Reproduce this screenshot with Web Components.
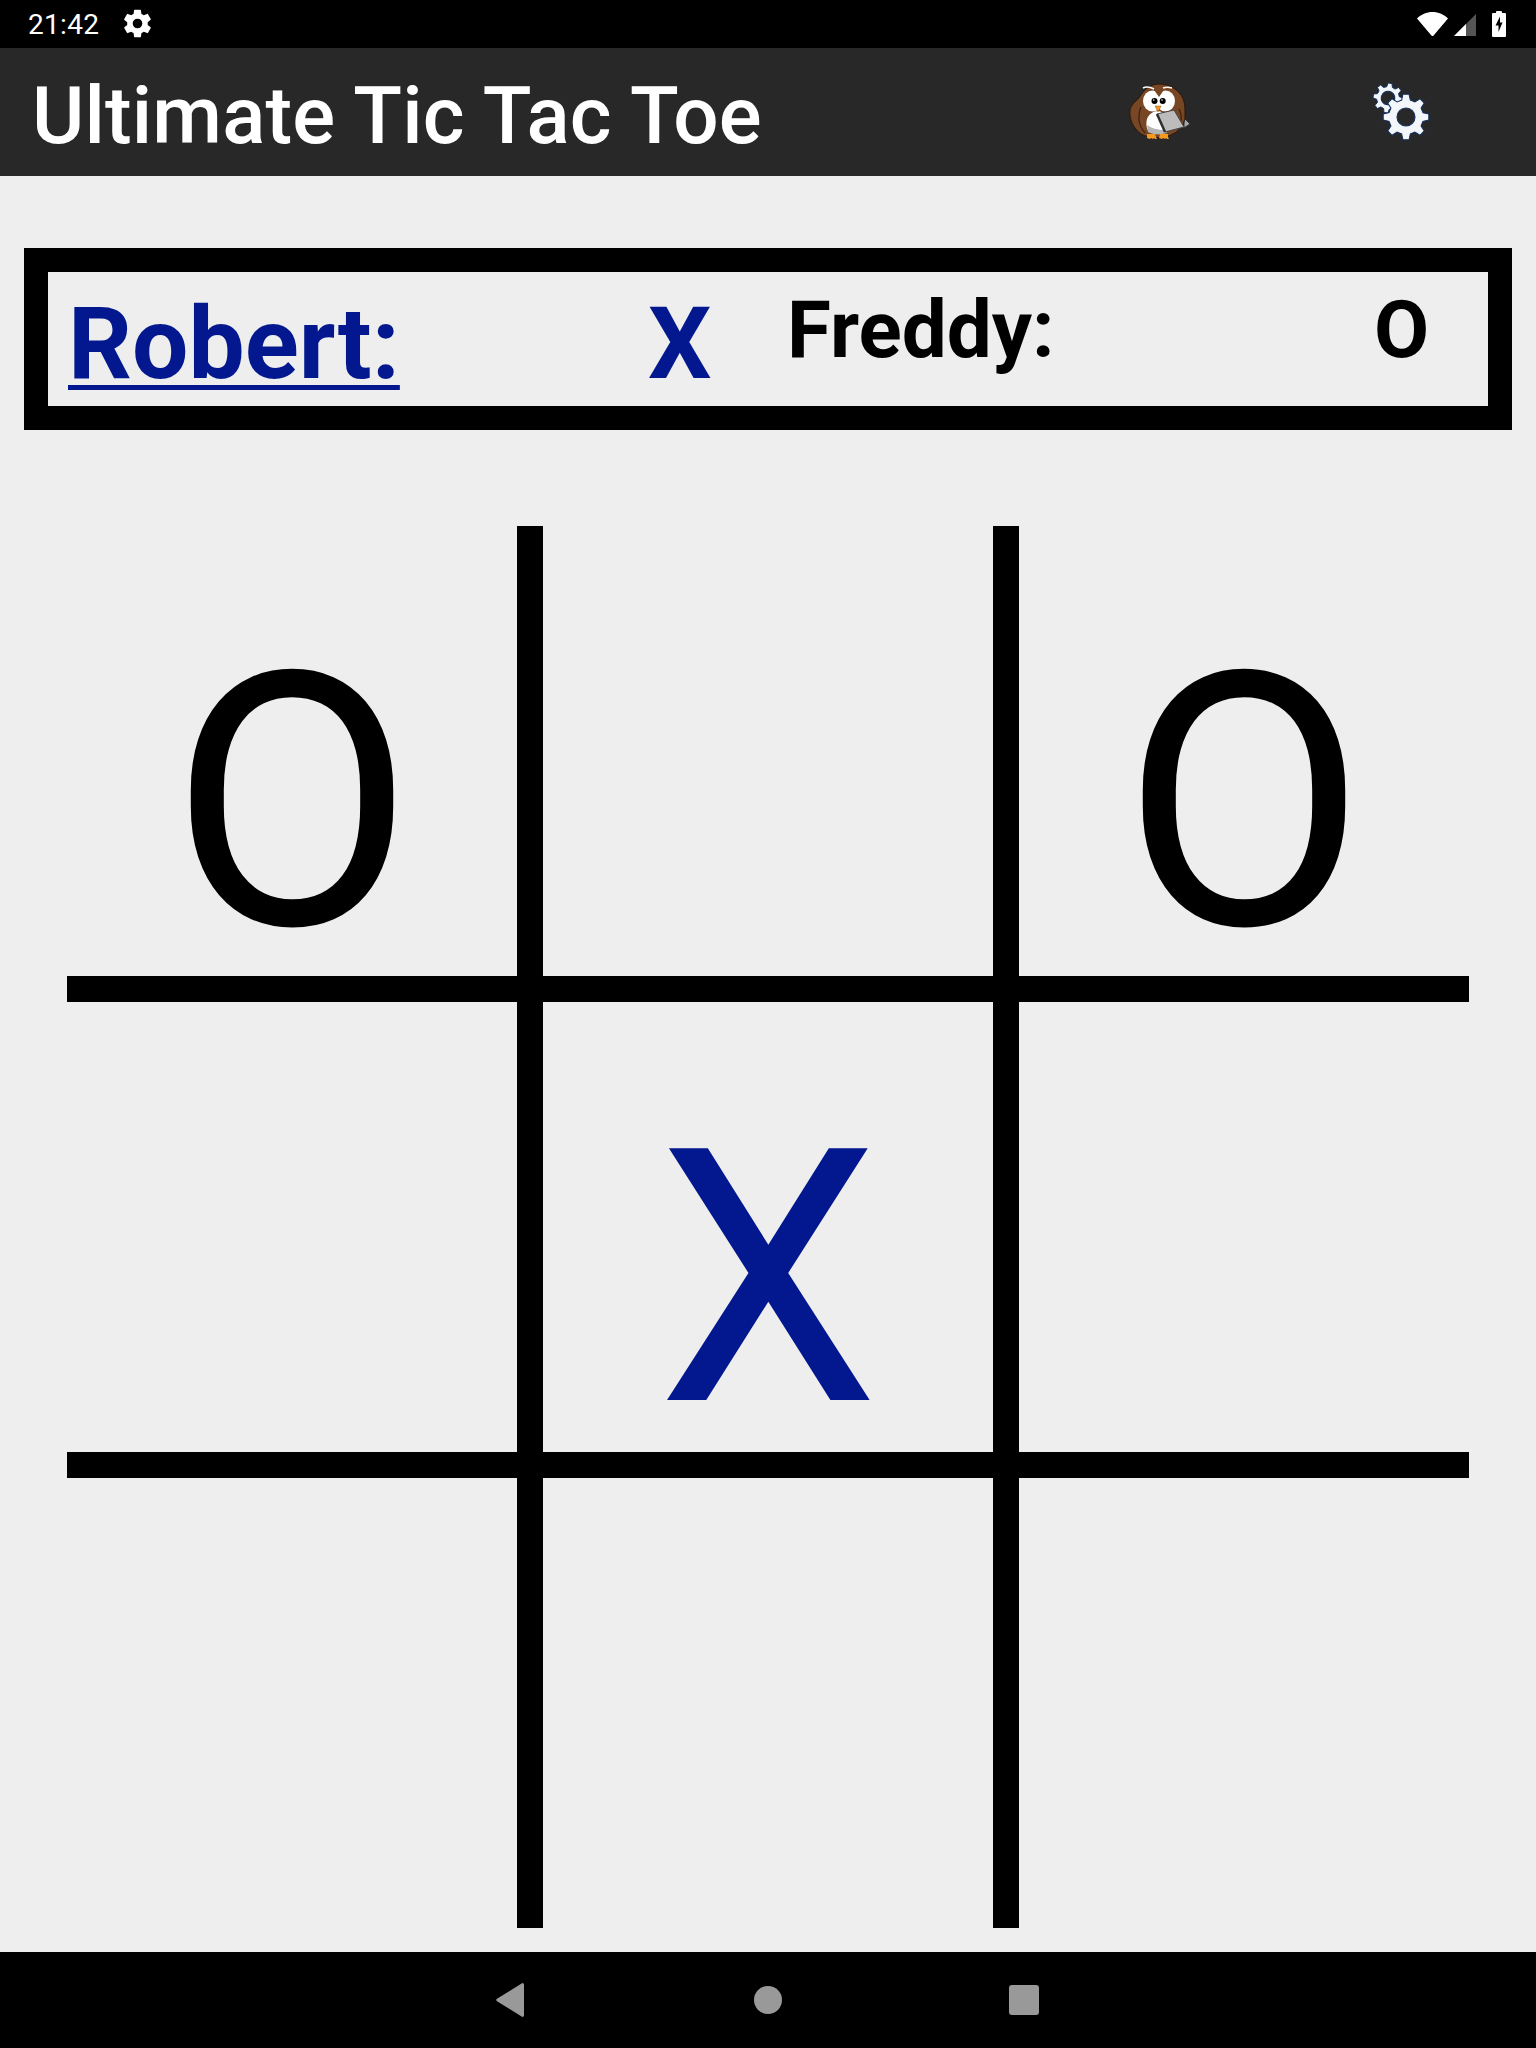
<!DOCTYPE html>
<html>
<head>
<meta charset="utf-8">
<title>Ultimate Tic Tac Toe</title>
<style>
  html, body { margin: 0; padding: 0; background: #eeeeee; }
  body { font-family: Roboto, "Liberation Sans", sans-serif; }
</style>
</head>
<body>
<game-screen>
  <status-bar slot="status" time="21:42"></status-bar>
  <app-bar slot="app" title="Ultimate Tic Tac Toe"></app-bar>
  <score-box slot="score">
    <player-score active name="Robert:" mark="X"></player-score>
    <player-score name="Freddy:" mark="O"></player-score>
  </score-box>
  <game-board slot="board" cells="O,,O,,X,,,,"></game-board>
  <nav-bar slot="nav"></nav-bar>
</game-screen>

<script>
const GEAR_PATH = (() => {
  // toothed wheel around 0,0 with radius 1
  const teeth = 8
  const pts = []
  for (let i = 0; i < teeth; i++) {
    const a = (i / teeth) * Math.PI * 2
    const step = (Math.PI * 2) / teeth
    const p = (r, t) => `${(Math.cos(t) * r).toFixed(3)} ${(Math.sin(t) * r).toFixed(3)}`
    pts.push(p(0.76, a - step * 0.32), p(1, a - step * 0.17), p(1, a + step * 0.17), p(0.76, a + step * 0.32))
  }
  return 'M' + pts.join('L') + 'Z'
})()

class GameScreen extends HTMLElement {
  constructor() {
    super()
    this.attachShadow({ mode: 'open' })
    this.shadowRoot.innerHTML = `
      <style>
        :host {
          display: flex;
          flex-direction: column;
          width: 1536px;
          height: 2048px;
          background: #eeeeee;
          overflow: hidden;
        }
        main {
          flex: 1;
          display: flex;
          flex-direction: column;
          padding: 72px 24px 24px;
          gap: 96px;
          min-height: 0;
        }
      </style>
      <slot name="status"></slot>
      <slot name="app"></slot>
      <main>
        <slot name="score"></slot>
        <slot name="board"></slot>
      </main>
      <slot name="nav"></slot>
    `
  }
}

class StatusBar extends HTMLElement {
  constructor() {
    super()
    this.attachShadow({ mode: 'open' })
  }

  connectedCallback() {
    this.shadowRoot.innerHTML = `
      <style>
        :host {
          display: flex;
          align-items: center;
          height: 48px;
          padding: 0 30px 0 28px;
          background: #000;
          color: #fff;
          font-size: 28px;
        }
        .time { width: 93px; letter-spacing: 0.3px; }
        .gear { display: block; margin-top: -1px; }
        .right { margin-left: auto; display: flex; align-items: center; }
        .right svg { display: block; }
      </style>
      <span class="time">${this.getAttribute('time')}</span>
      <svg class="gear" width="33" height="33" viewBox="0 0 24 24" fill="#fff">
        <path d="M19.4 13c.04-.33.06-.66.06-1s-.02-.67-.06-1l2.1-1.65c.2-.15.25-.42.13-.64l-2-3.46c-.12-.22-.39-.3-.61-.22l-2.49 1c-.52-.4-1.08-.73-1.69-.98l-.38-2.65A.49.49 0 0 0 14 2h-4c-.25 0-.46.18-.49.42l-.38 2.65c-.61.25-1.17.59-1.69.98l-2.49-1c-.23-.09-.49 0-.61.22l-2 3.46c-.13.22-.07.49.12.64L4.57 11c-.04.33-.07.67-.07 1s.03.67.07 1l-2.11 1.65c-.19.15-.24.42-.12.64l2 3.46c.12.22.39.3.61.22l2.49-1c.52.4 1.08.73 1.69.98l.38 2.65c.03.24.24.42.49.42h4c.25 0 .46-.18.49-.42l.38-2.65c.61-.25 1.17-.59 1.69-.98l2.49 1c.23.09.49 0 .61-.22l2-3.46c.12-.22.07-.49-.12-.64L19.4 13zM12 15.500a3.500 3.500 0 1 1 0-7 3.500 3.500 0 0 1 0 7z"/>
      </svg>
      <div class="right">
        <svg width="31" height="24" viewBox="0 0 31 24" style="margin-right:6px"><path d="M0 6.500C4 2.500 9.500 0 15.500 0S27 2.500 31 6.500L16.800 23.300a1.700 1.700 0 0 1-2.600 0Z" fill="#fff"/></svg>
        <svg width="22" height="22" viewBox="0 0 22 22" style="margin-right:16px;margin-top:2px"><path d="M22 0V22H0Z" fill="#555"/><path d="M12 10V22H0Z" fill="#fff"/></svg>
        <svg width="14" height="26" viewBox="0 0 14 26"><path d="M4 2V1a1 1 0 0 1 1-1h4a1 1 0 0 1 1 1v1h3a1 1 0 0 1 1 1v22a1 1 0 0 1-1 1H1a1 1 0 0 1-1-1V3a1 1 0 0 1 1-1Z" fill="#fff"/><path d="M8 5.500L3.500 14.500h3v6.500l4-9.500H8Z" fill="#000"/></svg>
      </div>
    `
  }
}

class OwlIcon extends HTMLElement {
  constructor() {
    super()
    this.attachShadow({ mode: 'open' })
    this.shadowRoot.innerHTML = `
      <style>:host { display: block; width: 62px; height: 58px; } svg { display: block; }</style>
      <svg width="62" height="58" viewBox="0 0 62 58">
        <path d="M55 35l6 6-6 4z" fill="#a8a8a8" stroke="#333" stroke-width="1"/>
        <path d="M12 51c-8-6-12-15-11-24 1-5 5-8 9-12C15 6 22 1 30 1c9 0 17 4 22 11 4 6 4 12 4 18 1 9-4 17-12 21-9 5-23 5-32 0z" fill="#774624" stroke="#2a170a" stroke-width="1"/>
        <path d="M12 24c-3 8-3 18 4 26M50 26c2 4 3 7 2 12" stroke="#3a2110" stroke-width="1.200" fill="none"/>
        <path d="M20 49c-3-4-3-9-2-13 2-5 6-8 11-8s5 4 6 8l3 13c-6 2-12 2-18 0z" fill="#fff"/>
        <path d="M18 42c4 3 11 5 18 5l2 3c-6 2-14 2-19-1z" fill="#b5b5b5"/>
        <ellipse cx="23.500" cy="18" rx="9.500" ry="10.500" fill="#fff"/>
        <ellipse cx="36.500" cy="18" rx="9.500" ry="10.500" fill="#fff"/>
        <path d="M23 4l7 10 7-10z" fill="#774624"/>
        <path d="M14 5c4-2 7-1 11 1M34 5c3-1 6-1 9 0" stroke="#fff" stroke-width="1.500" fill="none"/>
        <circle cx="25.500" cy="18" r="3" fill="#000"/>
        <circle cx="33.700" cy="18" r="3" fill="#000"/>
        <circle cx="24.800" cy="17" r="0.800" fill="#fff"/>
        <circle cx="33" cy="17" r="0.800" fill="#fff"/>
        <path d="M26 23h6l-3 6z" fill="#f39a1f" stroke="#8a5410" stroke-width="0.500"/>
        <path d="M28 31l17-4 10 17-19 5z" fill="#bcbcbc" stroke="#444" stroke-width="1"/>
        <path d="M28 31l8 18" stroke="#2f2f2f" stroke-width="2.500"/>
        <path d="M18 51h8l1 3 1 2h-2l-1-1-1 1-2-1-1 1-3-1z" fill="#f39a1f"/>
        <path d="M31 51h8l0 3 1 2h-2l-1-1-1 1-2-1-1 1-3-1z" fill="#f39a1f"/>
      </svg>
    `
  }
}

class GearsIcon extends HTMLElement {
  constructor() {
    super()
    this.attachShadow({ mode: 'open' })
    this.shadowRoot.innerHTML = `
      <style>:host { display: block; width: 58px; height: 60px; } svg { display: block; }</style>
      <svg width="58" height="60" viewBox="0 0 58 60">
        <g transform="translate(16 17) rotate(8) scale(15)">
          <path d="${GEAR_PATH}" fill="#f3f6fa" stroke="#14305c" stroke-width="0.060"/>
          <circle r="0.45" fill="#282828" stroke="#14305c" stroke-width="0.080"/>
        </g>
        <g transform="translate(34 36) scale(23)">
          <path d="${GEAR_PATH}" fill="#f3f6fa" stroke="#14305c" stroke-width="0.045"/>
          <circle r="0.39" fill="#282828" stroke="#14305c" stroke-width="0.050"/>
        </g>
      </svg>
    `
  }
}

class AppBar extends HTMLElement {
  constructor() {
    super()
    this.attachShadow({ mode: 'open' })
  }

  connectedCallback() {
    this.shadowRoot.innerHTML = `
      <style>
        :host {
          display: flex;
          align-items: center;
          height: 128px;
          padding: 0 106px 0 32px;
          background: #282828;
          color: #fff;
        }
        .title { flex: 1; font-size: 80px; font-weight: 500; letter-spacing: 0.14px; line-height: 128px; padding-top: 7px; }
        owl-icon { margin-right: 181px; }
        gears-icon { margin-top: -2px; }
      </style>
      <div class="title">${this.getAttribute('title')}</div>
      <owl-icon></owl-icon>
      <gears-icon></gears-icon>
    `
  }
}

class ScoreBox extends HTMLElement {
  constructor() {
    super()
    this.attachShadow({ mode: 'open' })
    this.shadowRoot.innerHTML = `
      <style>
        :host {
          display: grid;
          grid-template-columns: 721px 1fr;
          height: 134px;
          border: 24px solid #000;
        }
      </style>
      <slot></slot>
    `
  }
}

class PlayerScore extends HTMLElement {
  constructor() {
    super()
    this.attachShadow({ mode: 'open' })
  }

  connectedCallback() {
    const active = this.hasAttribute('active')
    this.shadowRoot.innerHTML = `
      <style>
        :host {
          display: grid;
          grid-template-columns: ${active ? '580px 1fr' : '587px 1fr'};
          align-items: start;
          font-weight: 700;
          color: ${active ? '#03188f' : '#000'};
          font-size: ${active ? '100px' : '80px'};
          line-height: 1;
          padding: ${active ? '22px 0 0 20px' : '18px 0 0 18px'};
        }
        .name { ${active ? 'text-decoration: underline; text-decoration-thickness: 5px; text-underline-offset: 7px;' : ''} }
      </style>
      <span class="name">${this.getAttribute('name')}</span>
      <span class="mark">${this.getAttribute('mark')}</span>
    `
  }
}

class GameBoard extends HTMLElement {
  constructor() {
    super()
    this.attachShadow({ mode: 'open' })
  }

  connectedCallback() {
    const cells = this.getAttribute('cells').split(',')
    this.shadowRoot.innerHTML = `
      <style>
        :host {
          display: grid;
          grid-template-columns: repeat(3, 450px);
          grid-template-rows: repeat(3, 450px);
          gap: 26px;
          width: 1402px;
          height: 1402px;
          margin-left: 43px;
          background: #000;
        }
        .cell {
          display: flex;
          align-items: flex-end;
          justify-content: center;
          background: #eeeeee;
          font-size: 354px;
          line-height: 346px;
        }
        .x { color: #03188f; }
      </style>
      ${cells.map((c) => `<div class="cell ${c === 'X' ? 'x' : ''}">${c}</div>`).join('')}
    `
  }
}

class NavBar extends HTMLElement {
  constructor() {
    super()
    this.attachShadow({ mode: 'open' })
    this.shadowRoot.innerHTML = `
      <style>
        :host {
          display: grid;
          grid-template-columns: repeat(3, 256px);
          justify-content: center;
          align-items: center;
          justify-items: center;
          height: 96px;
          background: #000;
        }
        svg { display: block; }
      </style>
      <svg width="32" height="34" viewBox="0 0 32 34"><path d="M28 1.500v31a1.500 1.500 0 0 1-2.400 1.100L1 18.200a1.500 1.500 0 0 1 0-2.400L25.600.4A1.500 1.500 0 0 1 28 1.500Z" fill="#999"/></svg>
      <svg width="28" height="28" viewBox="0 0 28 28"><circle cx="14" cy="14" r="14" fill="#999"/></svg>
      <svg width="30" height="30" viewBox="0 0 30 30"><rect width="30" height="30" rx="3" fill="#999"/></svg>
    `
  }
}

customElements.define('game-screen', GameScreen)
customElements.define('status-bar', StatusBar)
customElements.define('owl-icon', OwlIcon)
customElements.define('gears-icon', GearsIcon)
customElements.define('app-bar', AppBar)
customElements.define('score-box', ScoreBox)
customElements.define('player-score', PlayerScore)
customElements.define('game-board', GameBoard)
customElements.define('nav-bar', NavBar)
</script>
</body>
</html>
